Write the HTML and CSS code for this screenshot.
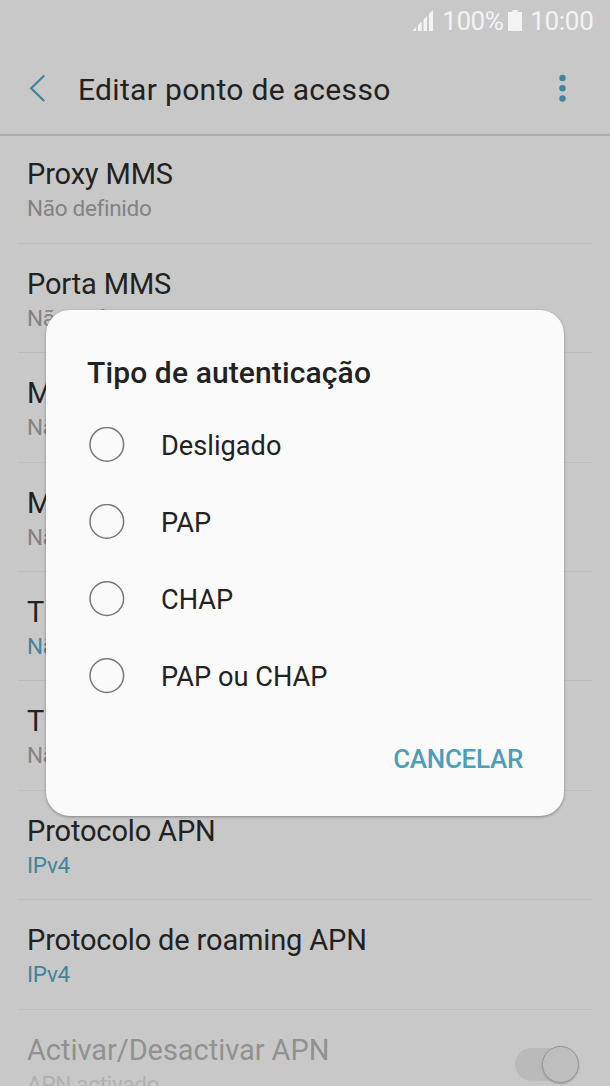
FILE: index.html
```html
<!DOCTYPE html>
<html lang="pt">
<head>
<meta charset="utf-8">
<title>Editar ponto de acesso</title>
<link rel="stylesheet" href="styles.css">
</head>
<body>
<div class="screen">
  <div class="status">
    <svg class="signal" width="21" height="22" viewBox="0 0 21 22"><path d="M0 21V20.300L3.200 17.100V21ZM5 21V15.300L8.700 11.600V21ZM10.500 21V9.800L14 6.300V21ZM16 21V3.800L20 0V21Z"/></svg>
    <span class="percent">100%</span>
    <svg class="battery" width="14" height="22" viewBox="0 0 14 22"><path d="M4.500 0H9.500V2H14V21H0V2H4.500Z"/></svg>
    <span class="clock">10:00</span>
  </div>
  <header class="bar">
    <svg class="back" width="18" height="30" viewBox="0 0 18 30"><path d="M16.200 2.500L3.200 15.200L16.200 28"/></svg>
    <h1 class="heading">Editar ponto de acesso</h1>
    <svg class="more" width="8" height="28" viewBox="0 0 8 28"><circle cx="3.500" cy="4" r="3.200"/><circle cx="3.500" cy="14.200" r="3.200"/><circle cx="3.500" cy="24.500" r="3.200"/></svg>
  </header>
  <main class="list">
    <div class="row"><div class="name">Proxy MMS</div><div class="value">Não definido</div></div>
    <div class="row"><div class="name">Porta MMS</div><div class="value">Não definido</div></div>
    <div class="row"><div class="name">MCC</div><div class="value">Não definido</div></div>
    <div class="row"><div class="name">MNC</div><div class="value">Não definido</div></div>
    <div class="row"><div class="name">Tipo</div><div class="value accent">Não definido</div></div>
    <div class="row"><div class="name">Tipo</div><div class="value">Não definido</div></div>
    <div class="row"><div class="name">Protocolo APN</div><div class="value accent">IPv4</div></div>
    <div class="row"><div class="name">Protocolo de roaming APN</div><div class="value accent">IPv4</div></div>
    <div class="row disabled">
      <div><div class="name">Activar/Desactivar APN</div><div class="value">APN activado</div></div>
      <div class="switch"><div class="thumb"></div></div>
    </div>
  </main>
  <section class="dialog">
    <h2 class="question">Tipo de autenticação</h2>
    <div class="option"><svg class="radio" width="36" height="36"><circle cx="17.800" cy="17.400" r="16.800"/></svg><span class="label">Desligado</span></div>
    <div class="option"><svg class="radio" width="36" height="36"><circle cx="17.800" cy="17.400" r="16.800"/></svg><span class="label">PAP</span></div>
    <div class="option"><svg class="radio" width="36" height="36"><circle cx="17.800" cy="17.600" r="16.800"/></svg><span class="label">CHAP</span></div>
    <div class="option"><svg class="radio" width="36" height="36"><circle cx="17.800" cy="17.600" r="16.800"/></svg><span class="label">PAP ou CHAP</span></div>
    <div class="actions"><span class="cancel">CANCELAR</span></div>
  </section>
</div>
</body>
</html>
```
FILE: styles.css
```css
* { box-sizing: border-box; }
body { margin: 0; font-family: Roboto, sans-serif; color: #222; }
.screen { position: relative; width: 610px; height: 1086px; overflow: hidden; background: #c8c8c8; }
.status { display: flex; align-items: flex-start; justify-content: flex-end; height: 42px; padding: 10px 16.500px 0 0; color: #f3f3f3; font-size: 26px; line-height: 22px; letter-spacing: -0.300px; }
.status svg { fill: #f3f3f3; flex: none; }
.percent { letter-spacing: -0.500px; }
.signal { margin-right: 8px; }
.battery { margin: 0 8px 0 5px; }
.bar { display: flex; align-items: center; height: 94px; padding: 0 43.500px 0 28px; border-bottom: 2px solid #adadad; }
.back { fill: none; stroke: #43849b; stroke-width: 2.300; }
.heading { margin: 3px auto 0 32px; font-size: 30px; font-weight: 400; line-height: 36px; letter-spacing: 0.320px; }
.more { fill: #43849b; }
.list { margin-top: -1.800px; }
.row { height: 109.440px; margin: 0 18px; padding: 22px 9px 0; border-bottom: 1px solid #bcbcbc; }
.name { font-size: 29px; line-height: 36px; letter-spacing: -0.150px; white-space: nowrap; }
.value { margin-top: 1px; font-size: 22.500px; line-height: 30px; letter-spacing: -0.300px; color: #828282; white-space: nowrap; }
.accent { color: #43849b; }
.disabled { display: flex; justify-content: space-between; padding-right: 13px; border: 0; }
.disabled .name { color: #919191; letter-spacing: -0.050px; }
.disabled .value { color: #b0b0b0; }
.switch { display: flex; justify-content: flex-end; align-items: center; width: 64px; height: 33px; margin-top: 16px; border-radius: 17px; background: #bababa; }
.thumb { flex: none; width: 37px; height: 37px; border: 1px solid #979797; border-radius: 50%; background: #bebebe; box-shadow: 0 1px 2px #999; }
.dialog { position: absolute; left: 46px; top: 310px; width: 518px; height: 506px; padding: 45px 41px 0; border-radius: 24px; background: #fafafa; box-shadow: 0 1px 3px rgba(0,0,0,.35); }
.question { margin: 0 0 15px; font-size: 30px; font-weight: 500; line-height: 36px; letter-spacing: 0.120px; }
.option { display: flex; align-items: center; gap: 36px; height: 77.200px; font-size: 27.200px; line-height: 34px; }
.label { margin-top: 2.400px; }
.radio { flex: none; margin-left: 2px; fill: none; stroke: #777; stroke-width: 1.500; }
.actions { display: flex; justify-content: flex-end; margin-top: 28px; }
.cancel { font-size: 26px; font-weight: 500; line-height: 32px; letter-spacing: -0.300px; color: #4e9dba; }
```
